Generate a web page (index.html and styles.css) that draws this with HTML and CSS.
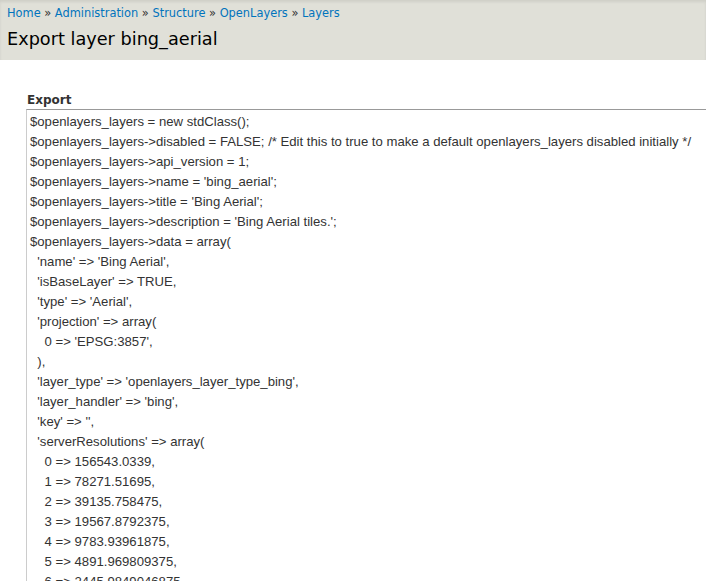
FILE: index.html
```html
<!DOCTYPE html>
<html>
  <head>
    <title>Export layer bing_aerial</title>
    <meta charset="utf-8">
    <meta name="viewport" content="width=device-width, initial-scale=1">
    <link rel="stylesheet" href="styles.css">
  </head>
  <body>
    <div class="branding">
      <div class="breadcrumb">
        <a href="#">Home</a> » <a href="#">Administration</a> » <a href="#">Structure</a> » <a href="#">OpenLayers</a> » <a href="#">Layers</a>
      </div>
      <h1 class="page-title">Export layer bing_aerial</h1>
    </div>
    <div class="content">
      <form name="export-form">
        <label for="export">Export</label>
        <textarea id="export" rows="30" readonly>$openlayers_layers = new stdClass();
$openlayers_layers->disabled = FALSE; /* Edit this to true to make a default openlayers_layers disabled initially */
$openlayers_layers->api_version = 1;
$openlayers_layers->name = 'bing_aerial';
$openlayers_layers->title = 'Bing Aerial';
$openlayers_layers->description = 'Bing Aerial tiles.';
$openlayers_layers->data = array(
  'name' => 'Bing Aerial',
  'isBaseLayer' => TRUE,
  'type' => 'Aerial',
  'projection' => array(
    0 => 'EPSG:3857',
  ),
  'layer_type' => 'openlayers_layer_type_bing',
  'layer_handler' => 'bing',
  'key' => '',
  'serverResolutions' => array(
    0 => 156543.0339,
    1 => 78271.51695,
    2 => 39135.758475,
    3 => 19567.8792375,
    4 => 9783.93961875,
    5 => 4891.969809375,
    6 => 2445.9849046875,
    7 => 1222.99245234375,
    8 => 611.496226171875,
    9 => 305.7481130859375,
  ),
);</textarea>
      </form>
    </div>
  </body>
</html>
```

FILE: styles.css
```css
html,
body {
  overflow: hidden;
}

body {
  background: white;
  color: #333;
  font: 13px/1.5 'DejaVu Sans', sans-serif;
  margin: 0;
}

.branding {
  background: #e0e0d8;
  box-shadow: inset 0 2px 3px rgba(0, 0, 0, 0.08);
  padding: 6px 7px 9px;
  height: 45px;
}

.breadcrumb {
  font-size: 11.4px;
  line-height: 15px;
}

.breadcrumb a {
  color: #0074bd;
  text-decoration: none;
}

.page-title {
  color: #000;
  font-size: 17.7px;
  font-weight: normal;
  line-height: 24px;
  margin: 6px 0 0;
}

.content {
  padding: 33px 0 0 26px;
}

.content label {
  display: block;
  font-size: 12px;
  font-weight: bold;
  line-height: 14px;
  margin: 0 0 2px 1px;
}

.content textarea {
  display: block;
  width: 760px;
  height: 600px;
  margin: 0;
  padding: 2px 3px;
  border: 1px solid #ccc;
  border-top-color: #999;
  color: #333;
  font: 13.15px/20px 'Liberation Sans', Arial, sans-serif;
  resize: none;
  overflow: hidden;
  white-space: pre;
}
```
